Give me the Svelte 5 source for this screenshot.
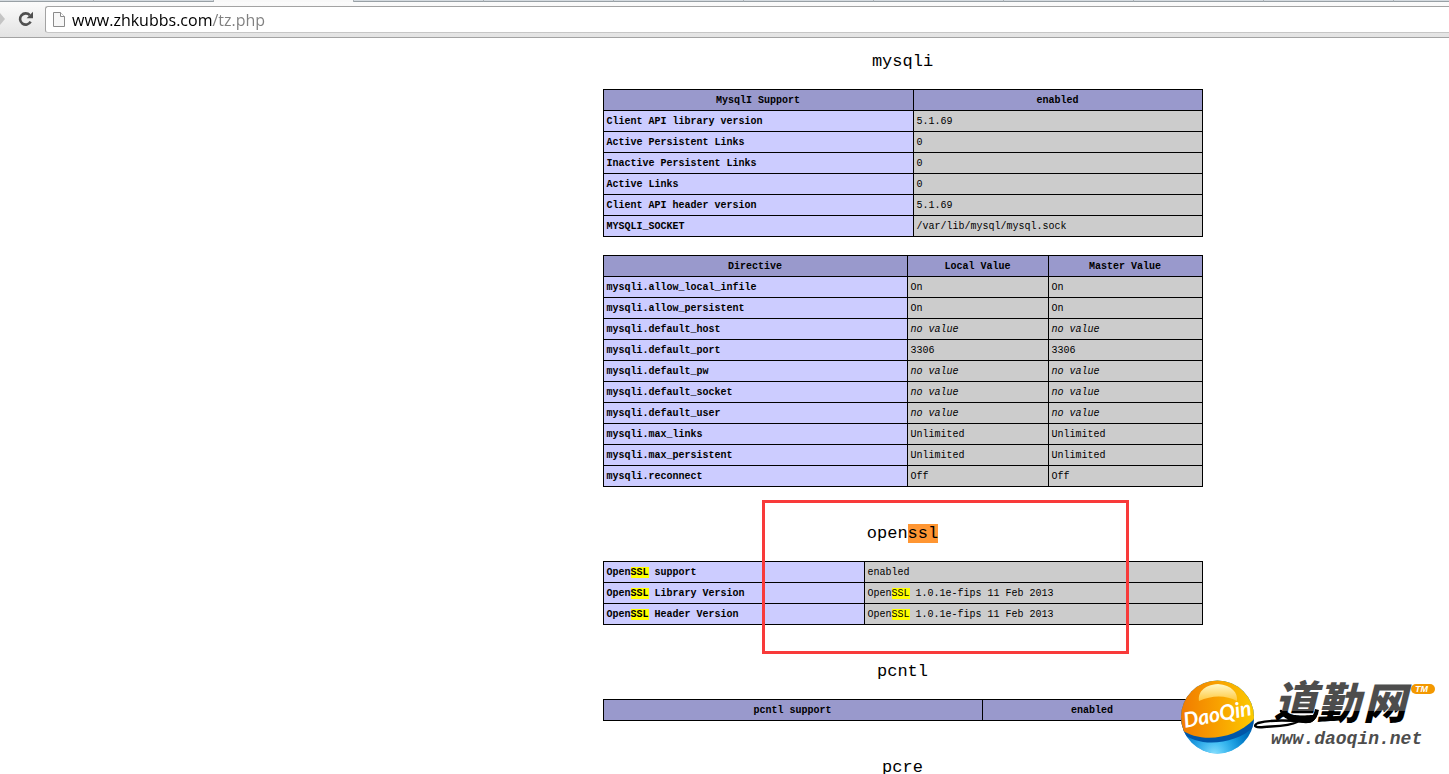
<script lang="ts">
	type Table = { cols: number[]; head?: string[]; rows: string[][] };
	type Section = { name: string; tables: Table[]; boxed?: boolean };

	let url = $state('www.zhkubbs.com/tz.php');
	const query = /(ssl)/i;

	const tabs = [94, 120, 140, 130, 130, 130, 130, 130, 130, 130, 130, 130];
	const activeTab = 2;

	const sections: Section[] = [
		{
			name: 'mysqli',
			tables: [
				{
					cols: [310, 289],
					head: ['MysqlI Support', 'enabled'],
					rows: [
						['Client API library version', '5.1.69'],
						['Active Persistent Links', '0'],
						['Inactive Persistent Links', '0'],
						['Active Links', '0'],
						['Client API header version', '5.1.69'],
						['MYSQLI_SOCKET', '/var/lib/mysql/mysql.sock']
					]
				},
				{
					cols: [304, 141, 154],
					head: ['Directive', 'Local Value', 'Master Value'],
					rows: [
						['mysqli.allow_local_infile', 'On', 'On'],
						['mysqli.allow_persistent', 'On', 'On'],
						['mysqli.default_host', 'no value', 'no value'],
						['mysqli.default_port', '3306', '3306'],
						['mysqli.default_pw', 'no value', 'no value'],
						['mysqli.default_socket', 'no value', 'no value'],
						['mysqli.default_user', 'no value', 'no value'],
						['mysqli.max_links', 'Unlimited', 'Unlimited'],
						['mysqli.max_persistent', 'Unlimited', 'Unlimited'],
						['mysqli.reconnect', 'Off', 'Off']
					]
				}
			]
		},
		{
			name: 'openssl',
			boxed: true,
			tables: [
				{
					cols: [261, 338],
					rows: [
						['OpenSSL support', 'enabled'],
						['OpenSSL Library Version', 'OpenSSL 1.0.1e-fips 11 Feb 2013'],
						['OpenSSL Header Version', 'OpenSSL 1.0.1e-fips 11 Feb 2013']
					]
				}
			]
		},
		{
			name: 'pcntl',
			tables: [{ cols: [379, 220], head: ['pcntl support', 'enabled'], rows: [] }]
		},
		{ name: 'pcre', tables: [] }
	];
</script>

{#snippet found(text: string, current: boolean)}
	{#each text.split(query) as part, i}{#if i % 2}<mark class:current>{part}</mark>{:else}{part}{/if}{/each}
{/snippet}

<div class="window">
	<header class="browser">
		<div class="tab-strip">
			{#each tabs as width, i}
				<span class="tab" class:active={i === activeTab} style="width: {width}px"></span>
			{/each}
		</div>
		<div class="toolbar">
			<button class="forward" aria-label="Forward">
				<svg width="6" height="14" viewBox="0 0 6 14"><path d="M0 1 L5 7 L0 13 Z" fill="#c4c4c4" /></svg>
			</button>
			<button class="reload" aria-label="Reload">
				<svg width="16" height="16" viewBox="0 0 16 16">
					<path d="M12.6 10.6 A5.6 5.6 0 1 1 11.8 4.2" fill="none" stroke="#505050" stroke-width="2.6" />
					<path d="M15 0.8 V7.2 H8.6 Z" fill="#505050" />
				</svg>
			</button>
			<label class="omnibox">
				<svg width="12" height="16" viewBox="0 0 12 16">
					<path d="M0.5 0.5 H7.5 L11.5 4.5 V14.5 H0.5 Z" fill="#f7f7f7" stroke="#8b8b8b" />
					<path d="M7.5 0.5 V4.5 H11.5" fill="#fff" stroke="#8b8b8b" />
				</svg>
				<input type="text" aria-label="Address" bind:value={url} spellcheck="false" />
			</label>
		</div>
	</header>

	<main>
		{#each sections as section}
			<section>
				<h2>{@render found(section.name, true)}</h2>
				{#each section.tables as table}
					<table>
						<colgroup>
							{#each table.cols as width}
								<col style="width: {width}px" />
							{/each}
						</colgroup>
						{#if table.head}
							<thead>
								<tr>
									{#each table.head as title}
										<th scope="col">{title}</th>
									{/each}
								</tr>
							</thead>
						{/if}
						<tbody>
							{#each table.rows as [key, ...values]}
								<tr>
									<th scope="row">{@render found(key, false)}</th>
									{#each values as value}
										<td>
											{#if value === 'no value'}<i>{value}</i>{:else}{@render found(value, false)}{/if}
										</td>
									{/each}
								</tr>
							{/each}
						</tbody>
					</table>
				{/each}
				{#if section.boxed}
					<div class="red-box"></div>
				{/if}
			</section>
		{/each}
	</main>

	<svg class="logo" width="279" height="109" viewBox="0 0 279 109">
		<defs>
			<linearGradient id="orange" x1="0" y1="0" x2="1" y2="0">
				<stop offset="0" stop-color="#f07800" />
				<stop offset="0.5" stop-color="#f8a000" />
				<stop offset="1" stop-color="#fccc00" />
			</linearGradient>
			<linearGradient id="blue" x1="0" y1="0" x2="1" y2="0">
				<stop offset="0" stop-color="#0a6cc0" />
				<stop offset="0.5" stop-color="#00a0ea" />
				<stop offset="1" stop-color="#0060ae" />
			</linearGradient>
			<radialGradient id="glow" cx="0.45" cy="1" r="0.5">
				<stop offset="0" stop-color="#8ee2ff" />
				<stop offset="1" stop-color="#19aef0" stop-opacity="0" />
			</radialGradient>
			<linearGradient id="shine" x1="0" y1="0" x2="0" y2="1">
				<stop offset="0" stop-color="#fff8c8" />
				<stop offset="1" stop-color="#ffc83c" />
			</linearGradient>
			<linearGradient id="ink" gradientUnits="userSpaceOnUse" x1="0" y1="0" x2="0" y2="92">
				<stop offset="0.5" stop-color="#4d4d4d" />
				<stop offset="0.5" stop-color="#000" />
			</linearGradient>
			<clipPath id="ball"><circle cx="47.5" cy="52" r="36.5" /></clipPath>
		</defs>
		<g clip-path="url(#ball)">
			<rect x="10" y="14" width="76" height="76" fill="url(#blue)" />
			<rect x="10" y="14" width="76" height="76" fill="url(#glow)" />
			<path d="M10 66 C28 84 66 80 86 60 L86 50 L10 50 Z" fill="#0056a8" />
			<path d="M8 62 C26 79 66 76 86 52 V10 H8 Z" fill="url(#orange)" />
		</g>
		<path d="M29 36 C28 28 33 20 48 19 C62 20 68 28 67 36 C56 30 42 30 29 36 Z" fill="url(#shine)" />
		<text class="ball-name" x="15" y="63" transform="rotate(-11 15 63)">DaoQin</text>
		<g class="hanzi" fill="url(#ink)">
			<text x="104" y="52">道</text>
			<text x="147" y="54">勤</text>
			<text x="193" y="54">网</text>
		</g>
		<path d="M147 48 C145 54 142 57 136 57 C118 55 100 55 88 58 C82 61 86 63 94 62 C108 61 120 61 127 57 C120 54 113 52 111 46" fill="none" stroke="#000" stroke-width="2.4" stroke-linecap="round" />
		<path d="M113 51 C124 56 136 60 142 57 C147 54 148 48 149 45 L145 44 C144 50 141 54 136 54 C128 54 120 52 113 51 Z" fill="#000" />
		<text class="site" x="101" y="79">www.daoqin.net</text>
		<rect x="241" y="19" width="24" height="10" rx="5" fill="#f39800" />
		<text class="tm" x="245" y="27">TM</text>
	</svg>
</div>

<style>
	:global(body) {
		margin: 0;
		background: #fff;
	}

	.window {
		position: relative;
		height: 100vh;
		overflow: hidden;
		color: #000;
		font-family: 'Liberation Mono', monospace;
	}

	.tab-strip {
		display: flex;
		height: 2px;
		overflow: hidden;
		background: #d5dbe0;
	}

	.tab {
		box-sizing: border-box;
		flex: none;
		border-right: 1px solid #a9b0b5;
		border-bottom: 1px solid #98a0a5;
	}

	.tab.active {
		background: #f8f8f8;
		border-bottom: none;
	}

	.toolbar {
		box-sizing: border-box;
		display: flex;
		align-items: center;
		height: 36px;
		padding: 0 0 1px;
		background: linear-gradient(#fbfbfb, #e3e3e3);
		border-bottom: 1px solid #a3a3a3;
	}

	button {
		display: flex;
		padding: 0;
		border: none;
		background: none;
	}

	.forward {
		width: 18px;
	}

	.reload {
		width: 27px;
	}

	.omnibox {
		box-sizing: border-box;
		flex: 1;
		display: flex;
		align-items: center;
		gap: 7px;
		height: 27px;
		padding: 2px 0 0 7px;
		background: #fff;
		border: 1px solid #a3a3a3;
		border-right: none;
		border-bottom-color: #c6c6c6;
		border-radius: 3px 0 0 3px;
	}

	input {
		flex: 1;
		height: 23px;
		padding: 0;
		border: none;
		outline: none;
		font: 16px 'Open Sans', sans-serif;
		/* host in black, path in grey */
		color: transparent;
		background: linear-gradient(90deg, #000 141px, #808080 141px);
		background-clip: text;
	}

	main {
		padding: 13px 0 0 356px;
	}

	section {
		position: relative;
		margin-bottom: 36px;
	}

	h2 {
		margin: 0 0 16px;
		font-size: 17px;
		font-weight: normal;
		line-height: 22px;
		text-align: center;
	}

	table {
		width: 599px;
		margin: 0 auto 18px;
		border-collapse: collapse;
		table-layout: fixed;
		font-size: 10px;
		line-height: 14px;
	}

	table:last-of-type {
		margin-bottom: 0;
	}

	th,
	td {
		padding: 4px 3px 2px;
		border: 1px solid #000;
		text-align: left;
	}

	td {
		background: #ccc;
	}

	th[scope='row'] {
		background: #ccf;
	}

	th[scope='col'] {
		background: #99c;
		text-align: center;
	}

	mark {
		color: inherit;
		background: #ff0;
	}

	mark.current {
		background: #ff9632;
	}

	.red-box {
		position: absolute;
		top: -23px;
		left: calc(50% - 141px);
		box-sizing: border-box;
		width: 367px;
		height: 154px;
		border: 3px solid #f83a3a;
	}

	.logo {
		position: absolute;
		right: 0;
		bottom: 0;
	}

	.ball-name {
		fill: #fff;
		font: italic bold 21px Lato, sans-serif;
	}

	.hanzi {
		font: italic 900 43px 'Noto Sans CJK SC', sans-serif;
	}

	.site {
		fill: #4d4d4d;
		font: italic bold 18px 'Liberation Mono', monospace;
	}

	.tm {
		fill: #fff;
		font: italic bold 9px 'Liberation Sans', sans-serif;
	}
</style>
